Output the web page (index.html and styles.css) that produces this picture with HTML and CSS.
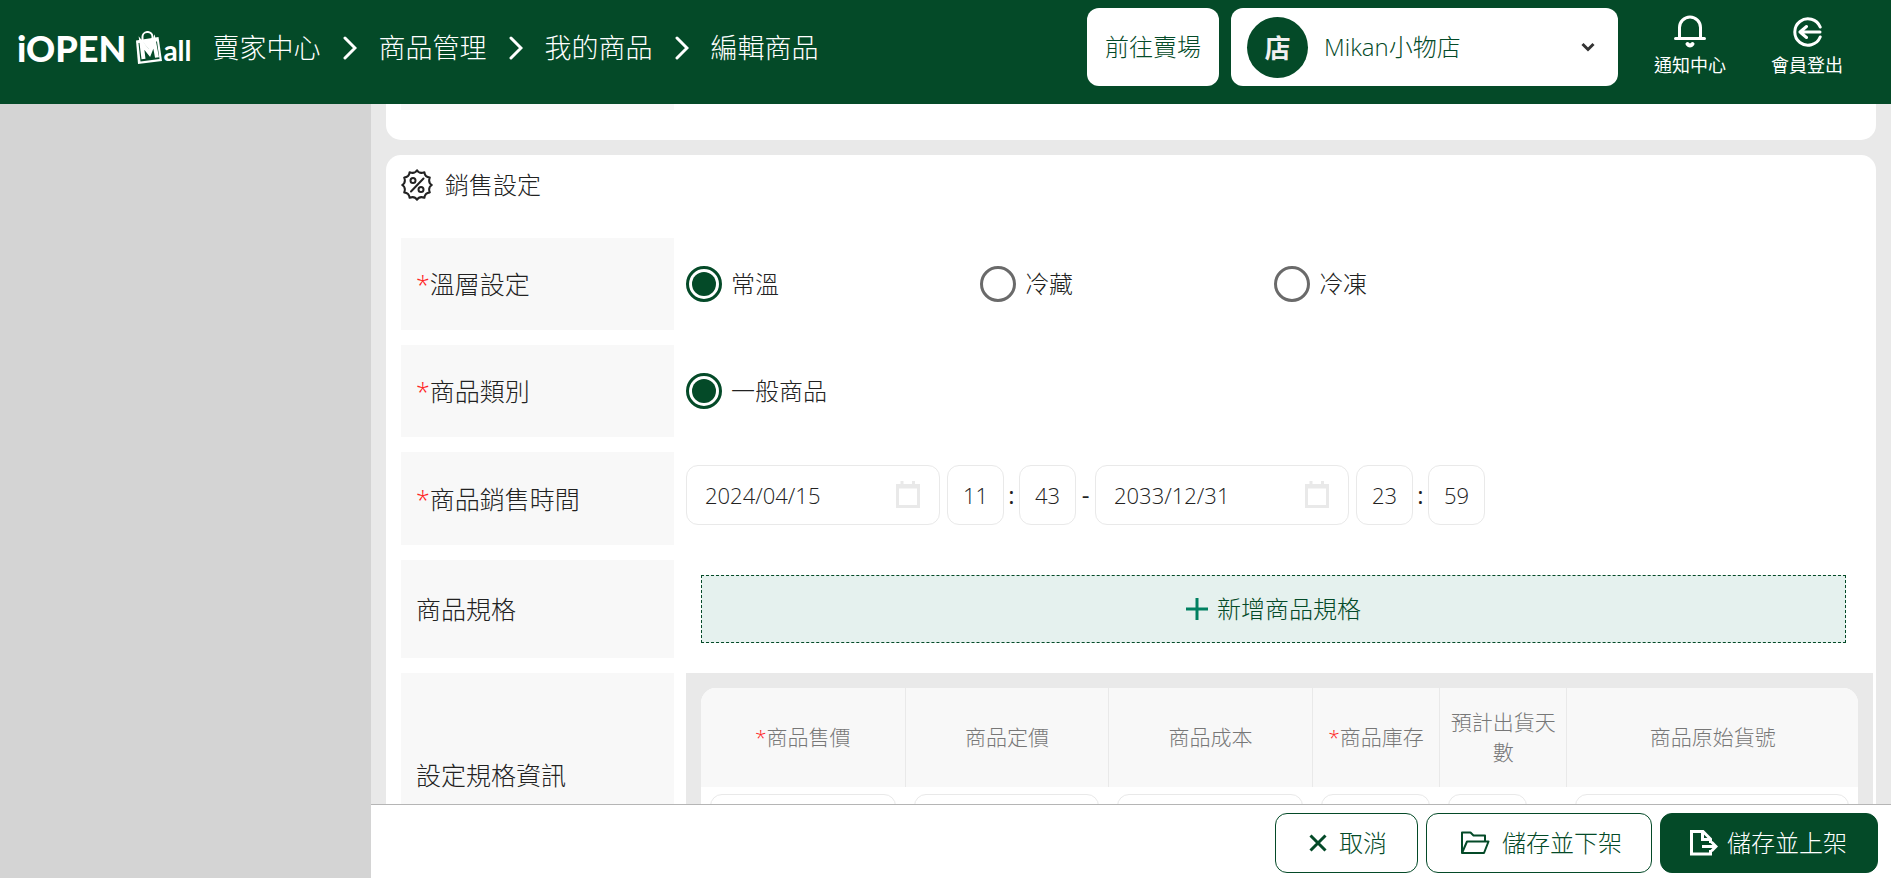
FILE: index.html
```html
<!DOCTYPE html>
<html lang="zh-Hant">
<head>
<meta charset="utf-8">
<meta name="viewport" content="width=device-width, initial-scale=1">
<title>編輯商品 - iOPEN Mall</title>
<link rel="stylesheet" href="styles.css">
</head>
<body>
<header class="topbar">
  <a class="logo" href="#" aria-label="iOPEN Mall">
    <span class="logo-open">iOPEN</span>
    <svg class="logo-bag" viewBox="0 0 28 34" aria-hidden="true">
      <path d="M1 9.500 23.500 6 27 30 3 33Z" fill="#fff"/>
      <path d="M3.500 12 5.500 30.500 24.500 28 22 10.500Z" fill="#044a28"/>
      <path d="M7.500 9.500V6.500a5 5 0 0 1 10-1V8" fill="none" stroke="#fff" stroke-width="2"/>
      <path d="M8.500 28 6.500 12l8 10L19 10.500l3 16" fill="none" stroke="#fff" stroke-width="4"/>
      <path d="M6 9h13l-4.500 10Z" fill="#fff"/>
    </svg>
    <span class="logo-all">all</span>
  </a>
  <nav class="crumbs">
    <a href="#">賣家中心</a>
    <svg class="crumb-arrow" viewBox="0 0 14 24"><path d="M2 2l10 10L2 22"/></svg>
    <a href="#">商品管理</a>
    <svg class="crumb-arrow" viewBox="0 0 14 24"><path d="M2 2l10 10L2 22"/></svg>
    <a href="#">我的商品</a>
    <svg class="crumb-arrow" viewBox="0 0 14 24"><path d="M2 2l10 10L2 22"/></svg>
    <a href="#">編輯商品</a>
  </nav>
  <button class="visit" type="button">前往賣場</button>
  <label class="store">
    <span class="avatar">店</span>
    <select class="store-select" aria-label="賣場"><option>Mikan小物店</option></select>
    <svg class="store-arrow" viewBox="0 0 14 10"><path d="M1.500 2 7 7.500 12.500 2"/></svg>
  </label>
  <a class="tool" href="#">
    <svg class="tool-icon" viewBox="0 0 34 34">
      <path d="M6.500 24V13.500a10.500 10.500 0 0 1 21 0V24M2.500 24.500h29" />
      <path d="M14.500 30q2.500 3 5 0" stroke-width="4"/>
    </svg>
    <span>通知中心</span>
  </a>
  <a class="tool" href="#">
    <svg class="tool-icon" viewBox="0 0 34 34">
      <path d="M30.200 13a13.200 13.200 0 1 0 0 10M30 18H10M16.500 12.500 10 18l6.500 5.500"/>
    </svg>
    <span>會員登出</span>
  </a>
</header>
<div class="body">
  <aside class="sidebar"></aside>
  <div class="content">
    <main class="scroll">
      <section class="card card-previous"><div class="label-tail"></div></section>
      <section class="card">
        <h2 class="card-title">
          <svg class="badge" viewBox="0 0 32 32">
            <path d="M16 1.200Q18.500 5.200 23.400 3.200 23.800 8.200 28.800 8.600 26.800 13.500 30.800 16 26.800 18.500 28.800 23.400 23.800 23.800 23.400 28.800 18.500 26.800 16 30.800 13.500 26.800 8.600 28.800 8.200 23.800 3.200 23.400 5.200 18.500 1.200 16 5.200 13.500 3.200 8.600 8.200 8.200 8.600 3.200 13.500 5.200 16 1.200Z"/>
            <path d="M22.500 9.500 10 22.500"/><circle cx="12" cy="11.500" r="2.500"/><circle cx="20" cy="20.500" r="2.500"/>
          </svg>
          銷售設定
        </h2>
        <div class="rows">
          <div class="row">
            <div class="label" id="l-temp"><span class="req">*</span>溫層設定</div>
            <div class="field radios" role="radiogroup" aria-labelledby="l-temp">
              <label class="radio"><input type="radio" name="temp" checked>常溫</label>
              <label class="radio"><input type="radio" name="temp">冷藏</label>
              <label class="radio"><input type="radio" name="temp">冷凍</label>
            </div>
          </div>
          <div class="row">
            <div class="label" id="l-kind"><span class="req">*</span>商品類別</div>
            <div class="field radios" role="radiogroup" aria-labelledby="l-kind">
              <label class="radio"><input type="radio" name="kind" checked>一般商品</label>
            </div>
          </div>
          <div class="row row-time">
            <div class="label"><span class="req">*</span>商品銷售時間</div>
            <div class="field times">
              <label class="date"><input type="text" value="2024/04/15" aria-label="開始日期">
                <svg viewBox="0 0 26 28"><path d="M2.500 4.500h21v21h-21zM7 0v6M18.500 0v6M3 6h20"/></svg></label>
              <input class="clock" type="text" value="11" aria-label="開始時"><span class="colon">:</span>
              <input class="clock" type="text" value="43" aria-label="開始分"><span class="dash">-</span>
              <label class="date"><input type="text" value="2033/12/31" aria-label="結束日期">
                <svg viewBox="0 0 26 28"><path d="M2.500 4.500h21v21h-21zM7 0v6M18.500 0v6M3 6h20"/></svg></label>
              <input class="clock" type="text" value="23" aria-label="結束時"><span class="colon">:</span>
              <input class="clock" type="text" value="59" aria-label="結束分">
            </div>
          </div>
          <div class="row">
            <div class="label">商品規格</div>
            <div class="field spec">
              <button class="add" type="button">
                <svg viewBox="0 0 22 22"><path d="M11 0v22M0 11h22"/></svg>新增商品規格
              </button>
            </div>
          </div>
          <div class="row row-info">
            <div class="label">設定規格資訊</div>
            <div class="panel">
              <table class="stock">
                <colgroup><col class="c-price"><col class="c-price"><col class="c-price"><col class="c-qty"><col class="c-qty"><col></colgroup>
                <thead><tr>
                  <th><span class="req">*</span>商品售價</th><th>商品定價</th><th>商品成本</th>
                  <th><span class="req">*</span>商品庫存</th><th>預計出貨天數</th><th>商品原始貨號</th>
                </tr></thead>
                <tbody><tr>
                  <td><input type="text" aria-label="商品售價"></td><td><input type="text" aria-label="商品定價"></td>
                  <td><input type="text" aria-label="商品成本"></td><td><input type="text" aria-label="商品庫存"></td>
                  <td><input class="days" type="text" aria-label="預計出貨天數"></td><td><input type="text" aria-label="商品原始貨號"></td>
                </tr></tbody>
              </table>
            </div>
          </div>
        </div>
      </section>
    </main>
    <footer class="actions">
      <button class="btn btn-cancel" type="button"><svg class="i-x" viewBox="0 0 18 18"><path d="M1.500 1.500l15 15M16.500 1.500l-15 15"/></svg>取消</button>
      <button class="btn btn-draft" type="button"><svg class="i-folder" viewBox="0 0 30 24"><path d="M2 22V1.500h8.500l3 3H25V10M2 22 7 10.500h21.500L24 22Z"/></svg>儲存並下架</button>
      <button class="btn btn-save" type="button"><svg class="i-doc" viewBox="0 0 28 26"><path d="M20.500 20V24H1.500V1.500H13L20.500 9V13M12.500 2v7.500H20M12 16.500h14M21.500 12l4.500 4.500-4.500 4.500"/></svg>儲存並上架</button>
    </footer>
  </div>
</div>
</body>
</html>
```
FILE: styles.css
```css
:root {
  --green: #044a28;
  --line: #e9e9e9;
  --pale: #f8f8f8;
  --font: "Open Sans", "Noto Sans CJK TC", sans-serif;
}
* { box-sizing: border-box; }
body {
  margin: 0;
  height: 100vh;
  display: flex;
  flex-direction: column;
  overflow: hidden;
  font: 300 24px/32px var(--font);
  color: #222;
}
button, input, select { font: inherit; color: inherit; }
a { color: inherit; text-decoration: none; }
svg { flex: none; fill: none; stroke: currentColor; }

.topbar {
  flex: none;
  height: 104px;
  padding: 0 48px 0 17px;
  display: flex;
  align-items: flex-start;
  background: var(--green);
  color: #fff;
}
.logo { height: 96px; display: flex; align-items: center; white-space: nowrap; }
.logo-open { font: 900 36px/40px Lato, sans-serif; }
.logo-bag { width: 28px; height: 34px; margin-left: 9px; stroke: none; }
.logo-all { font: 700 28px/40px Lato, sans-serif; padding-top: 4px; }
.crumbs { height: 96px; margin-left: 21px; display: flex; align-items: center; gap: 22px; font-size: 27px; white-space: nowrap; }
.crumb-arrow { width: 14px; height: 24px; stroke-width: 3; stroke-linecap: round; }
.visit {
  height: 78px;
  margin: 8px 12px 0 auto;
  padding: 0 18px;
  border: 0;
  border-radius: 12px;
  background: #fff;
  color: var(--green);
}
.store {
  width: 387px;
  height: 78px;
  margin-top: 8px;
  padding: 0 23px 0 16px;
  display: flex;
  align-items: center;
  gap: 16px;
  border-radius: 12px;
  background: #fff;
  color: var(--green);
}
.avatar {
  flex: none;
  width: 61px;
  height: 61px;
  border-radius: 50%;
  background: var(--green);
  color: #f0f0f0;
  font: 700 26px/60px "Noto Sans CJK TC", sans-serif;
  text-align: center;
}
.store-select { flex: 1; min-width: 0; height: 61px; padding: 0; border: 0; background: none; appearance: none; }
.store-arrow { width: 14px; height: 10px; color: #333; stroke-width: 3; }
.tool {
  width: 72px;
  margin-left: 36px;
  padding-top: 14px;
  display: flex;
  flex-direction: column;
  align-items: center;
  font-size: 18px;
  font-weight: 400;
  line-height: 34px;
  white-space: nowrap;
}
.tool + .tool { margin-left: 45px; }
.tool-icon { width: 34px; height: 34px; stroke-width: 3; stroke-linecap: round; stroke-linejoin: round; }

.body { flex: 1; min-height: 0; display: flex; }
.sidebar { flex: none; width: 371px; background: #d4d4d4; }
.content { flex: 1; min-width: 0; display: flex; flex-direction: column; }
.scroll { flex: 1; min-height: 0; padding: 0 15px; overflow: hidden; background: var(--line); }
.card { padding: 14px 3px 15px 15px; border-radius: 15px; background: #fff; }
.card-previous { margin-bottom: 15px; padding: 0 3px 30px 15px; border-radius: 0 0 15px 15px; }
.label-tail { width: 273px; height: 6px; background: var(--pale); }
.card-title { margin: 0 0 37px; display: flex; align-items: center; gap: 12px; font-size: 24px; font-weight: 300; }
.badge { width: 32px; height: 32px; stroke-width: 2; stroke-linecap: round; stroke-linejoin: round; }
.rows { display: flex; flex-direction: column; gap: 15px; }
.row { min-height: 92px; display: grid; grid-template-columns: 273px 1fr; gap: 12px; }
.row-time { min-height: 93px; }
.row-info { min-height: 204px; }
.label { padding: 0 15px; display: flex; align-items: center; background: var(--pale); font-size: 25px; }
.req { color: #f22; }
.field { display: flex; align-items: center; }
.radio { width: 294px; display: flex; align-items: center; gap: 9px; }
.radio input {
  appearance: none;
  width: 36px;
  height: 36px;
  margin: 0;
  padding: 3px;
  border: 3px solid #6a6a6a;
  border-radius: 50%;
}
.radio input:checked { border-color: var(--green); background: var(--green) content-box; }
.times { padding-bottom: 8px; }
.date, .clock { height: 60px; border: 1px solid var(--line); border-radius: 12px; background: #fff; }
.date { width: 254px; margin-right: 7px; padding: 0 18px; display: flex; align-items: center; }
.date input { flex: 1; min-width: 0; padding: 0; border: 0; background: none; }
.date input, .clock { font-size: 22px; }
.date svg { width: 26px; height: 28px; stroke: var(--line); stroke-width: 3; }
.clock { width: 57px; padding: 0; text-align: center; }
.colon, .dash { font-weight: 400; text-align: center; }
.colon { width: 15px; }
.dash { width: 19px; }
.spec { padding: 15px 27px 15px 15px; }
.add {
  flex: 1;
  height: 68px;
  display: flex;
  align-items: center;
  justify-content: center;
  gap: 9px;
  border: 1px dashed var(--green);
  background: #e5f1ee;
  color: var(--green);
}
.add svg { width: 22px; height: 22px; stroke: #008060; stroke-width: 3; }
.panel { padding: 15px; background: var(--line); }
.stock { width: 100%; table-layout: fixed; border-spacing: 0; border-radius: 15px 15px 0 0; overflow: hidden; background: #fff; }
.c-price { width: 17.6%; }
.c-qty { width: 11%; }
.stock th { height: 99px; padding: 0 8px 2px; background: var(--pale); color: #777; font-size: 21px; font-weight: 300; line-height: 30px; }
.stock th + th { border-left: 1px solid var(--line); }
.stock td { padding: 7px 9px; }
.stock input { display: block; width: 100%; height: 60px; border: 1px solid var(--line); border-radius: 12px; }
.stock input.days { width: 79px; }

.actions { flex: none; height: 74px; padding: 8px 13px 0; display: flex; justify-content: flex-end; gap: 8px; border-top: 1px solid #b5b5b5; background: #fff; }
.btn {
  height: 60px;
  padding: 0 30px;
  display: flex;
  align-items: center;
  gap: 12px;
  border: 1px solid var(--green);
  border-radius: 12px;
  background: #fff;
  color: var(--green);
  white-space: nowrap;
}
.btn-cancel { padding: 0 30px 0 33px; }
.btn-draft { padding: 0 29px 0 33px; }
.btn-save { padding: 0 30px 0 29px; background: var(--green); color: #fff; gap: 9px; }
.i-x { width: 18px; height: 18px; stroke-width: 3; }
.i-folder { width: 30px; height: 24px; stroke-width: 2; stroke-linejoin: round; }
.i-doc { width: 28px; height: 26px; stroke-width: 3; }
```
